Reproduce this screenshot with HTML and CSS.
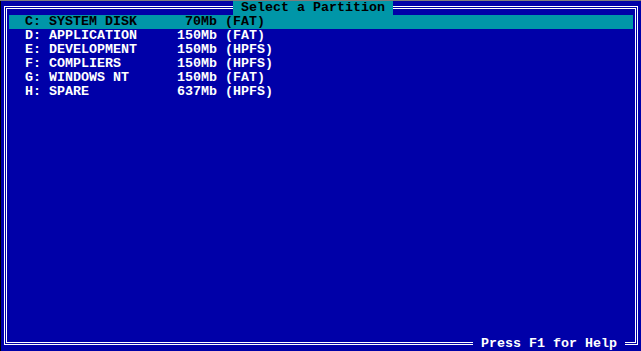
FILE: index.html
```html
<!DOCTYPE html>
<html>
<head>
<link rel="stylesheet" href="styles.css">
</head>
<body>
    <div id="screen">
        <div id="frame">
            <div class="row selected">
                <span class="drive">C:</span><span class="name">SYSTEM DISK</span><span class="size">70Mb</span><span class="fs">(FAT)</span>
            </div>
            <div class="row">
                <span class="drive">D:</span><span class="name">APPLICATION</span><span class="size">150Mb</span><span class="fs">(FAT)</span>
            </div>
            <div class="row">
                <span class="drive">E:</span><span class="name">DEVELOPMENT</span><span class="size">150Mb</span><span class="fs">(HPFS)</span>
            </div>
            <div class="row">
                <span class="drive">F:</span><span class="name">COMPLIERS</span><span class="size">150Mb</span><span class="fs">(HPFS)</span>
            </div>
            <div class="row">
                <span class="drive">G:</span><span class="name">WINDOWS NT</span><span class="size">150Mb</span><span class="fs">(FAT)</span>
            </div>
            <div class="row">
                <span class="drive">H:</span><span class="name">SPARE</span><span class="size">637Mb</span><span class="fs">(HPFS)</span>
            </div>
        </div>
        <div id="title">Select a Partition</div>
        <div id="help">Press F1 for Help</div>
    </div>
</body>
</html>
```

FILE: styles.css
```css
html, body {
    margin: 0;
    background: #000;
}
body {
    border-top: 1px solid #7c7c7c;
    width: 641px;
    height: 350px;
    overflow: hidden;
}
#screen {
    position: relative;
    width: 640px;
    height: 350px;
    margin-left: 1px;
    background: #0000a8;
    font-family: "Liberation Mono", monospace;
    font-size: 13.3333px;
    font-weight: bold;
    line-height: 14px;
    color: #fff;
    padding: 5px 3px 0 3px;
    box-sizing: border-box;
}
/* double line box, 1px line / 1px gap / 1px line */
#frame {
    width: 634px;
    height: 339px;
    box-sizing: border-box;
    border: 3px double #fff;
    padding: 6px 2px 0 2px;
}
.row {
    display: flex;
    height: 14px;
    padding-left: 16px;
    white-space: pre;
}
.row.selected {
    background: #0096a8;
    color: #000;
}
.drive {
    width: 24px;
}
.name {
    width: 128px;
}
.size {
    width: 40px;
    text-align: right;
}
.fs {
    margin-left: 8px;
}
#title {
    position: absolute;
    left: 232px;
    top: 0;
    width: 160px;
    height: 14px;
    padding-left: 8px;
    box-sizing: border-box;
    background: #0096a8;
    color: #000;
}
#help {
    position: absolute;
    left: 472px;
    top: 336px;
    width: 152px;
    height: 14px;
    padding-left: 8px;
    box-sizing: border-box;
    background: #0000a8;
}
```
